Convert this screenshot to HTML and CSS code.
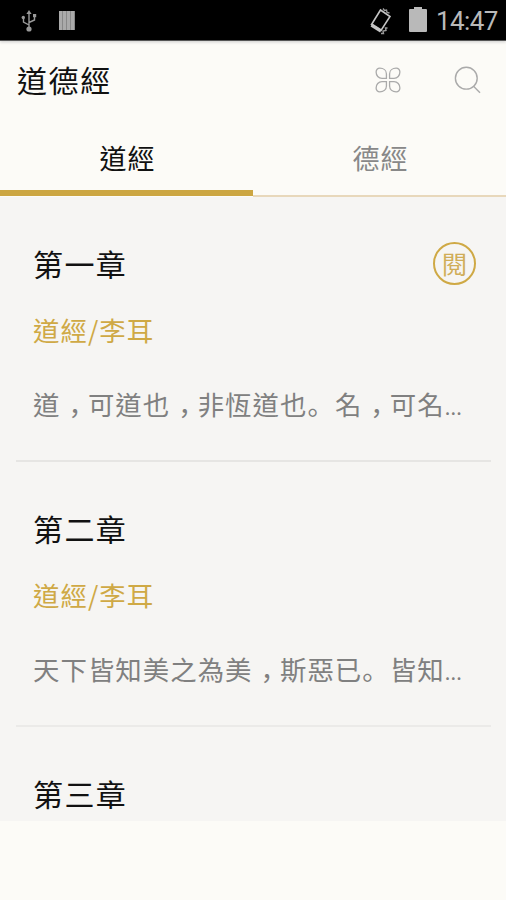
FILE: index.html
```html
<!DOCTYPE html>
<html lang="zh-Hant">
    <head>
        <meta charset="UTF-8" />
        <meta name="viewport" content="width=device-width, initial-scale=1.0" />
        <title>道德經</title>
        <link rel="stylesheet" href="styles.css">
    </head>
    <body>
        <div class="status">
            <svg class="usb" width="16" height="22" viewBox="0 0 16 22">
                <path d="M8 3V19M8 15L2.500 12V8M8 12.500L13.500 10V6" />
                <path class="fill" d="M8 0l2.600 4h-5.200z" />
                <circle class="fill" cx="8" cy="19" r="2.600" />
                <circle class="fill" cx="2.300" cy="7.500" r="1.700" />
                <path class="fill" d="M12 4h3.200v3.200h-3.200z" />
            </svg>
            <div class="bars"></div>
            <svg class="rotate" width="24" height="28" viewBox="0 0 24 28">
                <path class="phone" d="M11.500 3L21 9.500L12 23.500L2.500 17.500Z" />
                <path class="edge" d="M2.500 18L12 24" />
                <path class="wave" d="M14 1.500l1.500 2l2-.5l.5 2.500l2.500 .5M12 26.500h2.500l-.5-2.500l3-.5l-.5-2.500h2" />
            </svg>
            <svg class="battery" width="18" height="26" viewBox="0 0 18 26">
                <path class="fill" d="M5 0h8v2h4q1 0 1 1v21q0 1-1 1h-16q-1 0-1-1v-21q0-1 1-1h4z" />
            </svg>
            <span class="time">14:47</span>
        </div>
        <div class="header">
            <h1>道德經</h1>
            <svg class="clover" width="26" height="26" viewBox="0 0 28 28">
                <path id="leaf" d="M12.300 12.300H7.500C3.800 12.300 1.200 9 1.200 5.500C1.200 3 2.800 1.300 5.200 1.300C9 1.300 12.300 3.600 12.300 7.500Z" />
                <use href="#leaf" transform="matrix(-1 0 0 1 28 0)" />
                <use href="#leaf" transform="matrix(1 0 0 -1 0 28)" />
                <use href="#leaf" transform="rotate(180 14 14)" />
            </svg>
            <svg class="search" width="28" height="28" viewBox="0 0 28 28">
                <circle cx="12.300" cy="12.200" r="10.900" />
                <path d="M19.300 20L26 26.700" />
            </svg>
        </div>
        <ul class="tabs">
            <li class="active">道經</li>
            <li>德經</li>
        </ul>
        <div class="list">
            <div class="item">
                <div class="top">
                    <h2>第一章</h2>
                    <span class="read">閱</span>
                </div>
                <p class="author">道經/李耳</p>
                <p class="text">道<i lang="zh-CN">，</i>可道也<i lang="zh-CN">，</i>非恆道也<span lang="zh-CN">。</span>名<i lang="zh-CN">，</i>可名<b>...</b></p>
            </div>
            <div class="item">
                <div class="top">
                    <h2>第二章</h2>
                </div>
                <p class="author">道經/李耳</p>
                <p class="text">天下皆知美之為美<i lang="zh-CN">，</i>斯惡已<span lang="zh-CN">。</span>皆知<b>...</b></p>
            </div>
            <div class="item">
                <div class="top">
                    <h2>第三章</h2>
                </div>
            </div>
        </div>
    </body>
</html>
```

FILE: styles.css
```css
* {
    margin: 0;
    padding: 0;
    box-sizing: border-box;
}
body {
    height: 900px;
    overflow: hidden;
    background-color: #fcfbf7;
    font-family: "Noto Sans CJK SC", sans-serif;
    color: #111;
}
svg {
    fill: none;
    flex: none;
}
/* 状态栏 */
.status {
    display: flex;
    align-items: flex-start;
    height: 41px;
    padding-left: 21px;
    background-color: #000;
    border-bottom: 1px solid #555;
    box-shadow: 0 1px 3px #ccc;
}
.status svg {
    stroke: #999;
    stroke-width: 1.4;
}
.status .fill {
    fill: #999;
    stroke: none;
}
.usb {
    margin-top: 10px;
}
.bars {
    width: 16px;
    height: 19px;
    margin: 11px 0 0 22px;
    background: repeating-linear-gradient(90deg, #aaa 0, #aaa 3px, #888 3px, #888 4px);
}
.rotate {
    margin: 7px 0 0 294px;
}
.status .phone {
    stroke: #c4c4c4;
    stroke-width: 1.6;
}
.status .edge {
    stroke: #c4c4c4;
    stroke-width: 3.4;
}
.battery {
    margin: 7px 0 0 16px;
}
.status .battery .fill {
    fill: #b9b9b9;
}
.time {
    margin-left: 9px;
    font: 26px/42px Roboto, sans-serif;
    letter-spacing: -0.6px;
    color: #b9b9b9;
}
/* 标题 */
.header {
    display: flex;
    align-items: center;
    height: 78px;
    padding: 0 24px 0 17px;
}
.header h1 {
    flex: 1;
    padding-bottom: 2px;
    font-size: 30px;
    font-weight: 400;
    letter-spacing: 1.6px;
}
.header svg {
    stroke: #aaa;
    stroke-width: 1.4;
}
.search {
    margin-left: 53px;
}
/* 选项卡 */
.tabs {
    display: flex;
    height: 78px;
    list-style: none;
}
.tabs li {
    flex: 1;
    height: 78px;
    padding-left: 2px;
    line-height: 78px;
    text-align: center;
    font-size: 27px;
    letter-spacing: 1px;
    color: #888;
    border-bottom: 2px solid #e8d8bb;
}
.tabs li.active {
    height: 77px;
    color: #111;
    border-bottom: 6px solid #cca642;
}
/* 列表 */
.list {
    height: 624px;
    padding: 0 15px 0 16px;
    background-color: #f6f5f3;
    overflow: hidden;
}
.item {
    height: 265px;
    padding: 39px 15px 0 17px;
    border-bottom: 2px solid #e6e5e3;
}
.item:nth-child(2) {
    border-color: #ebeae8;
}
.top {
    display: flex;
    justify-content: space-between;
    align-items: center;
    height: 54px;
}
.top h2 {
    font-size: 30px;
    font-weight: 400;
    letter-spacing: 1.4px;
}
.read {
    width: 43px;
    height: 43px;
    border: 2px solid #cfa945;
    border-radius: 50%;
    font-size: 25px;
    line-height: 38px;
    text-align: center;
    color: #d0ad58;
}
.author {
    height: 80px;
    line-height: 80px;
    font-size: 26.400px;
    letter-spacing: 1.050px;
    color: #cfa945;
}
.text {
    height: 68px;
    line-height: 68px;
    font-size: 26.400px;
    letter-spacing: 1.050px;
    white-space: nowrap;
    color: #808080;
}
/* 逗号占半格，居中显示 */
.text i {
    padding: 0 5.200px 0 8px;
    font-style: normal;
    font-feature-settings: "halt";
}
.text b {
    font-weight: 400;
    font-size: 20px;
    letter-spacing: 0.200px;
}
```
